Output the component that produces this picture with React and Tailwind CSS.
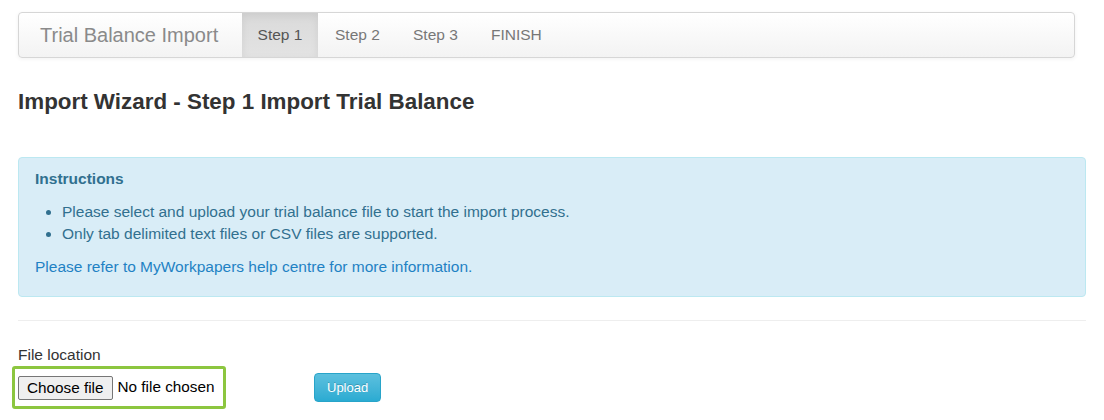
import React from "react";

const steps = ["Step 1", "Step 2", "Step 3", "FINISH"];

const App = () => {
  return (
    <div className="min-h-screen bg-white px-[18px] pt-[12px] font-['Liberation_Sans',Arial,sans-serif] text-[#333]">
      {/* Wizard navbar */}
      <div className="mr-[11px] flex h-[46px] rounded-[4px] border border-[#d6d6d6] bg-gradient-to-b from-white to-[#f3f3f3] shadow-[0_1px_4px_rgba(0,0,0,0.06)]">
        <div className="flex w-[223px] items-center pl-[21px] text-[20px] text-[#8a8a8a]">
          Trial Balance Import
        </div>
        {steps.map((step, i) => (
          <div
            key={step}
            className={
              i === 0
                ? "flex w-[76px] items-center justify-center bg-gradient-to-b from-[#dadada] to-[#e3e3e3] text-[15.5px] text-[#555] shadow-[inset_0_3px_9px_rgba(0,0,0,0.07)]"
                : "flex w-[78px] items-center pl-[17px] text-[15.5px] text-[#777]"
            }
          >
            {step}
          </div>
        ))}
      </div>

      <h3 className="mt-[31px] text-[22.4px] font-bold leading-[26px] text-[#333]">
        Import Wizard - Step 1 Import Trial Balance
      </h3>

      {/* Instructions */}
      <div className="mt-[42px] rounded-[4px] border border-[#bce8f1] bg-[#d9edf7] px-[16px] pt-[10px] pb-[18px] text-[15.5px] leading-[22px] text-[#31708f]">
        <div className="font-bold">Instructions</div>
        <ul className="mt-[11px] list-disc pl-[27px]">
          <li>Please select and upload your trial balance file to start the import process.</li>
          <li>Only tab delimited text files or CSV files are supported.</li>
        </ul>
        <p className="mt-[11px] text-[#1f82c4]">Please refer to MyWorkpapers help centre for more information.</p>
      </div>

      <div className="mt-[23px] border-t border-[#eeeeee]" />

      {/* File upload */}
      <div className="mt-[23px] text-[15.5px] leading-[22px] text-[#333]">File location</div>
      <div className="flex items-center">
        <div className="ml-[-6px] flex h-[43px] w-[214px] items-center rounded-[3px] border-[3px] border-[#8cc63f] pl-[3px]">
          <span className="rounded-[2px] border border-[#767676] bg-[#efefef] px-[8px] text-[15.3px] leading-[22px] text-black">
            Choose file
          </span>
          <span className="ml-[5px] text-[15.3px] text-black">No file chosen</span>
        </div>
        <button className="ml-[88px] rounded-[4px] border border-[#28a4c9] bg-gradient-to-b from-[#5bc0de] to-[#2aabd2] px-[12px] text-[13px] leading-[27px] text-white [text-shadow:0_-1px_0_rgba(0,0,0,0.2)]">
          Upload
        </button>
      </div>
    </div>
  );
};

export default App;
